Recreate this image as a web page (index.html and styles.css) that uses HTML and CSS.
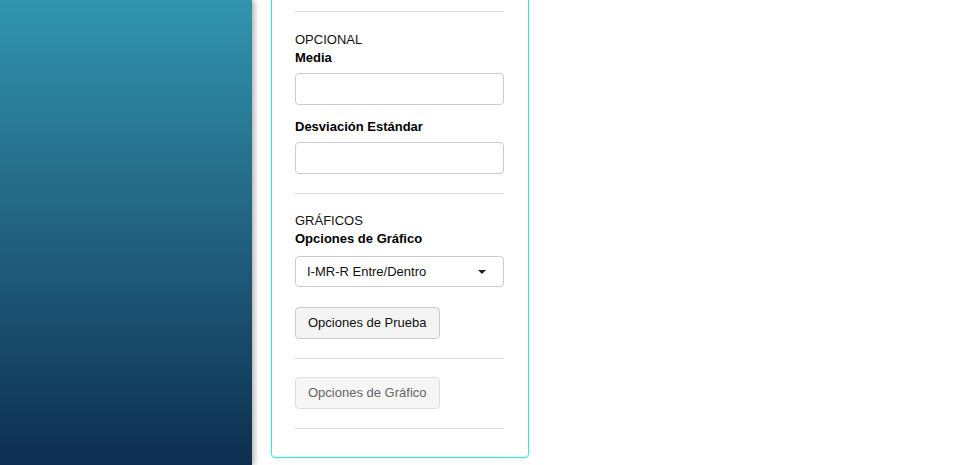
FILE: index.html
```html
<!DOCTYPE html>
<html lang="es">
<head>
  <meta charset="UTF-8">
  <meta name="viewport" content="width=device-width, initial-scale=1.0">
  <title>Opciones</title>
  <link rel="stylesheet" href="styles.css">
</head>
<body>
  <div id="sidebar"></div>
  <div id="main">
    <div class="panel">
      <hr>
      <div class="section">
        <div class="section-title">OPCIONAL</div>
        <label class="field-label" for="media">Media</label>
        <input id="media" class="field" type="text">
        <label class="field-label spaced" for="desv">Desviación Estándar</label>
        <input id="desv" class="field" type="text">
      </div>
      <hr>
      <div class="section">
        <div class="section-title">GRÁFICOS</div>
        <label class="field-label">Opciones de Gráfico</label>
        <div class="select">
          <span>I-MR-R Entre/Dentro</span>
          <span class="caret"></span>
        </div>
        <button class="btn">Opciones de Prueba</button>
      </div>
      <hr>
      <button class="btn" disabled>Opciones de Gráfico</button>
      <hr>
    </div>
  </div>
</body>
</html>
```

FILE: styles.css
```css
html, body {
  height: 100%;
}
body {
  font-family: "Liberation Sans", Arial, sans-serif;
  font-size: 13px;
  line-height: 18px;
  color: #222;
  margin: 0;
  padding: 0;
  display: flex;
  overflow: hidden;
  background-color: #fff;
}
#sidebar {
  width: 252px;
  flex-shrink: 0;
  background: linear-gradient(to bottom, #3195ae 0%, #22627f 50%, #0d2e50 100%);
  box-shadow: 2px 0 6px rgba(0, 0, 0, 0.35);
  position: relative;
  z-index: 1;
}
#main {
  flex: 1;
  padding-left: 19px;
  display: flex;
  flex-direction: column;
  justify-content: flex-end;
  padding-bottom: 7px;
}
.panel {
  width: 258px;
  box-sizing: border-box;
  border: 1px solid #2ff0d0;
  border-radius: 4px;
  padding: 0 24px 28px 23px;
  display: flex;
  flex-direction: column;
  align-items: flex-start;
  box-shadow: 0 1px 2px rgba(0, 0, 0, 0.08);
}
.panel hr {
  align-self: stretch;
  border: 0;
  border-top: 1px solid #ddd;
  margin: 19px 0 18px;
}
.panel hr:first-child {
  margin-bottom: 19px;
}
.panel hr:last-child {
  margin-bottom: 0;
}
.section {
  align-self: stretch;
  display: flex;
  flex-direction: column;
  align-items: flex-start;
}
.section-title {
  color: #111;
}
.field-label {
  font-weight: bold;
  color: #000;
  margin-bottom: 6px;
}
.field-label.spaced {
  margin-top: 13px;
}
.field {
  align-self: stretch;
  height: 32px;
  box-sizing: border-box;
  border: 1px solid #ccc;
  border-radius: 4px;
  padding: 6px 12px;
  font: inherit;
  margin: 0;
}
.select {
  align-self: stretch;
  height: 31px;
  box-sizing: border-box;
  border: 1px solid #ccc;
  border-radius: 4px;
  padding: 0 17px 0 11px;
  display: flex;
  align-items: center;
  justify-content: space-between;
  color: #111;
  margin-top: 2px;
  margin-bottom: 20px;
}
.caret {
  width: 0;
  height: 0;
  border-left: 4px solid transparent;
  border-right: 4px solid transparent;
  border-top: 4px solid #222;
}
.btn {
  height: 32px;
  box-sizing: border-box;
  padding: 0 12px;
  border: 1px solid #ccc;
  border-radius: 4px;
  background-color: #f4f4f4;
  color: #111;
  font: inherit;
  cursor: pointer;
}
.btn:disabled {
  color: #666;
  background-color: #f6f6f6;
  border-color: #ddd;
  cursor: default;
}
```
